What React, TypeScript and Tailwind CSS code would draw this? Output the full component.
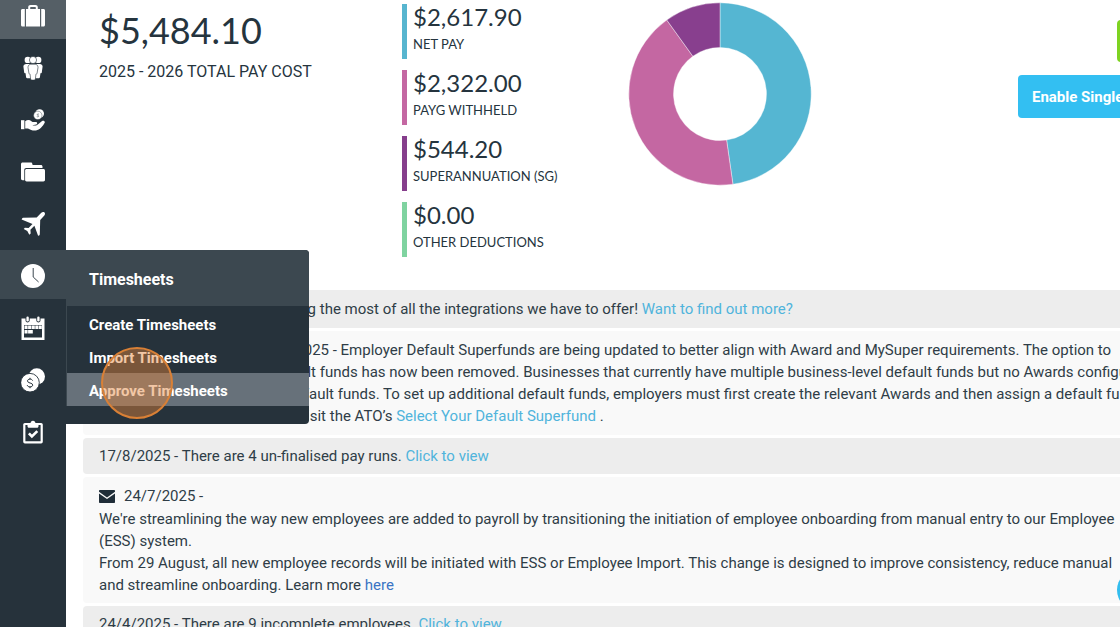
import type { ReactNode } from 'react';

function SuitcaseIcon() {
  return (
    <svg viewBox="0 0 24 24" className="size-6" fill="currentColor" aria-hidden="true">
      <path fillRule="evenodd" d="M5 5h2.200V3.200C7.200 1.800 8.300 1 9.500 1h5c1.200 0 2.300.8 2.300 2.200V5H19v17.500H5zM9.200 5h5.600V3.400c0-.3-.2-.5-.5-.5H9.700c-.3 0-.5.2-.5.5z" />
      <path d="M1.500 5H3.800v17.500H1.500C.6 22.500 0 21.900 0 21V6.500C0 5.600.6 5 1.500 5zM20.200 5h2.300c.9 0 1.500.6 1.500 1.500V21c0 .9-.6 1.500-1.500 1.500h-2.300z" />
    </svg>
  );
}

function PeopleIcon() {
  return (
    <svg viewBox="0 0 24 24" className="size-6" fill="currentColor" aria-hidden="true">
      <circle cx="6.800" cy="3.900" r="3.200" />
      <circle cx="17.200" cy="3.900" r="3.200" />
      <path d="M2.400 10.500C2.400 8.800 3.600 7.900 5.200 7.900h13.600c1.600 0 2.800.9 2.800 2.600l-.8 6c-.1.800-.9.900-1.300.5l-.6 4.200c-.1.700-.5 1.100-1.200 1.100H6.300c-.7 0-1.100-.4-1.200-1.100L4.500 17c-.4.400-1.200.3-1.300-.5z" />
      <circle cx="12" cy="4" r="3.600" stroke="#26323b" strokeWidth=".6" />
      <path stroke="#26323b" strokeWidth=".6" d="M7 11.500C7 9.500 8.200 8.300 9.800 8.300h4.400c1.600 0 2.800 1.200 2.800 3.200l-.9 5.500c-.2.900-.6 1.200-1.200 1.200l-.5 4.800c-.1.700-.5 1.100-1.200 1.100h-2.400c-.7 0-1.100-.4-1.200-1.100l-.5-4.800c-.6 0-1-.3-1.200-1.200z" />
    </svg>
  );
}

function HandCoinIcon() {
  return (
    <svg viewBox="0 0 24 24" className="size-6" fill="currentColor" aria-hidden="true">
      <path d="M0 12.200h3.400v9H0z" />
      <path d="M4.200 13.200c2-1.600 4.600-1.500 6.200 0l1.200.9h3.300c1.500 0 1.800 2 .4 2.400l-3.900.8c1.800.6 3.700.4 5.400-.9l4.300-3.300c1.600-.9 3.400.4 2.400 1.900-1.700 3.200-4.700 6.800-8.500 7.400-2.800.4-5.500-.3-8-1.900H4.200z" />
      <circle cx="18.600" cy="5.600" r="4.400" />
      <circle cx="16.800" cy="7.400" r="4.200" stroke="#26323b" strokeWidth=".4" />
      <path d="M18 6.200c-2-.7-2.300 1-1.100 1.200 1.300.3 1 1.900-1.100 1.200" fill="none" stroke="#26323b" strokeWidth=".5" />
    </svg>
  );
}

function FolderIcon() {
  return (
    <svg viewBox="0 0 24 24" className="size-6" fill="currentColor" aria-hidden="true">
      <path d="M1.600 2.500h8.200c.9 0 1.300.4 1.500 1.200l.3 1.300h8.300c.9 0 1.600.7 1.600 1.500V8H5.200C4 8 3.300 8.700 3.300 9.900v10.300H1.600C.7 20.200 0 19.500 0 18.600V4c0-.9.700-1.500 1.600-1.500z" />
      <path d="M5.600 8.900h16.800c.9 0 1.600.6 1.600 1.500v9.400c0 .9-.7 1.600-1.600 1.600H5.600c-.9 0-1.500-.7-1.500-1.600v-9.400c0-.9.600-1.500 1.500-1.500z" />
    </svg>
  );
}

function PlaneIcon() {
  return (
    <svg viewBox="0 0 24 24" className="size-6" fill="currentColor" aria-hidden="true">
      <path d="M23.500.5c.9.900.5 2.400-.6 3.600l-3.700 4-.4 14.200c0 .5-.3.900-.7 1.100l-1 .4-3.700-10-4 4 .3 3.600-1.400 1.300-2-3.600-3.600-2 1.200-1.300 3.700.2 3.900-4L.6 7.500l.5-1.100c.2-.4.500-.6 1-.6l13.600-.4L19.800 1.200c1.200-1.200 2.800-1.600 3.700-.7z" />
    </svg>
  );
}

function ClockIcon() {
  return (
    <svg viewBox="0 0 24 24" className="size-6" aria-hidden="true">
      <circle cx="12" cy="12" r="12" fill="currentColor" />
      <path d="M12.200 4v9l5.400 5" fill="none" stroke="#3c4850" strokeWidth="1" />
    </svg>
  );
}

function CalendarIcon() {
  return (
    <svg viewBox="0 0 24 24" className="size-6" aria-hidden="true">
      <path fill="currentColor" d="M.5 2.500h4v1.800c0 2.800 4.200 2.800 4.200 0V2.500h6.600v1.800c0 2.800 4.200 2.800 4.200 0V2.500h4V24H.5z" />
      <rect x="5.400" y="0.500" width="2.400" height="5" rx="1.200" fill="currentColor" />
      <rect x="16.200" y="0.500" width="2.400" height="5" rx="1.200" fill="currentColor" />
      <path fill="#26323b" d="M3 9h18v12.500H3z" />
      <path fill="currentColor" d="M3.500 9.600h3.100v3.400H3.500zM7.100 9.600h3.100v3.400H7.100zM10.700 9.600h3.100v3.400h-3.100zM14.300 9.600h3.100v3.400h-3.100zM17.900 9.600h2.900v3.400h-2.900zM3.500 14h3.100v3.400H3.500zM7.100 14h4.700v3.400H7.100z" />
    </svg>
  );
}

function CoinsIcon() {
  return (
    <svg viewBox="0 0 24 24" className="size-6" aria-hidden="true">
      <circle cx="15.800" cy="8.500" r="8.200" fill="currentColor" />
      <circle cx="9" cy="14.700" r="9.300" fill="currentColor" stroke="#26323b" strokeWidth=".9" />
      <path d="M11.600 12.600c-.5-1.100-1.400-1.500-2.600-1.500-1.400 0-2.500.7-2.500 1.900 0 2.700 5.200 1.300 5.200 4 0 1.300-1.200 1.900-2.700 1.900s-2.500-.6-2.800-1.800M9 9.800v1.400M9 18.800v1.400" fill="none" stroke="#26323b" strokeWidth="1" />
    </svg>
  );
}

function ClipboardIcon() {
  return (
    <svg viewBox="0 0 24 24" className="size-6" aria-hidden="true">
      <rect x="3.300" y="4" width="17.400" height="18.300" rx=".6" fill="none" stroke="currentColor" strokeWidth="2.200" />
      <path fill="currentColor" d="M6.500 3.500h3C9.600 1.700 10.500.7 12 .7s2.400 1 2.500 2.800h3v2.700c0 .9-.6 1.500-1.500 1.500H8c-.9 0-1.500-.6-1.500-1.500z" />
      <path d="M7.900 13.300l3 3.200 5.400-5.400" fill="none" stroke="currentColor" strokeWidth="2.600" />
    </svg>
  );
}

const navItems: { label: string; icon: ReactNode; tone: string; menu?: boolean }[] = [
  { label: 'Business', icon: <SuitcaseIcon />, tone: 'bg-[#555f66]' },
  { label: 'Employees', icon: <PeopleIcon />, tone: '' },
  { label: 'Pay', icon: <HandCoinIcon />, tone: '' },
  { label: 'Reports', icon: <FolderIcon />, tone: '' },
  { label: 'Leave', icon: <PlaneIcon />, tone: '' },
  { label: 'Timesheets', icon: <ClockIcon />, tone: 'bg-[#3c4850]', menu: true },
  { label: 'Rosters', icon: <CalendarIcon />, tone: '' },
  { label: 'Expenses', icon: <CoinsIcon />, tone: '' },
  { label: 'Tasks', icon: <ClipboardIcon />, tone: '' },
];

function TimesheetsMenu() {
  return (
    <div className="absolute top-0 left-full z-10 w-[243px] overflow-hidden rounded-r bg-[#26323b] pb-[18px] font-['Roboto',sans-serif] text-[15px] font-bold text-white">
      <h2 className="flex h-14 items-center bg-[#3c4850] pt-[3px] pl-[23px] text-base">Timesheets</h2>
      <ul className="border-l border-[#3c4850] pt-px">
        <li><a href="#create" className="flex h-[33px] items-center pt-[3px] pl-[22px]">Create Timesheets</a></li>
        <li><a href="#import" className="flex h-[33px] items-center pt-[3px] pl-[22px]">Import Timesheets</a></li>
        <li><a href="#approve" className="flex h-[33px] items-center bg-[#67717a] pt-[3px] pl-[22px]">Approve Timesheets</a></li>
      </ul>
    </div>
  );
}

function Sidebar() {
  return (
    <nav className="w-[66px] shrink-0 bg-[#26323b] text-white">
      <ul className="-mt-[10px] flex flex-col gap-[3px]">
        {navItems.map((item) => (
          <li key={item.label} className="relative">
            <a href="#nav" aria-label={item.label} className={`flex h-[49px] items-center justify-center pt-[3px] ${item.tone}`}>
              {item.icon}
            </a>
            {item.menu && <TimesheetsMenu />}
          </li>
        ))}
      </ul>
    </nav>
  );
}

const stats = [
  { value: '$2,617.90', label: 'NET PAY', bar: 'border-[#57b5cf]' },
  { value: '$2,322.00', label: 'PAYG WITHHELD', bar: 'border-[#c467a2]' },
  { value: '$544.20', label: 'SUPERANNUATION (SG)', bar: 'border-[#863e8c]' },
  { value: '$0.00', label: 'OTHER DEDUCTIONS', bar: 'border-[#7fd3a0]' },
];

const slices = [
  { amount: 2617.9, color: '#55b6d2' },
  { amount: 2322, color: '#c467a2' },
  { amount: 544.2, color: '#883f8e' },
];

function Donut() {
  const total = slices.reduce((sum, s) => sum + s.amount, 0);
  let start = 0;
  const point = (r: number, t: number) =>
    `${(92 + r * Math.sin(t * 2 * Math.PI)).toFixed(2)} ${(92 - r * Math.cos(t * 2 * Math.PI)).toFixed(2)}`;
  return (
    <svg viewBox="0 0 184 184" className="size-[184px]" role="img" aria-label="Pay cost breakdown">
      {slices.map((s) => {
        const a = start;
        const b = start + s.amount / total;
        start = b;
        const large = b - a > 0.5 ? 1 : 0;
        return (
          <path
            key={s.color}
            fill={s.color}
            stroke="#ffffff"
            strokeOpacity=".4"
            strokeWidth="1"
            d={`M${point(91.2, a)}A91.200 91.200 0 ${large} 1 ${point(91.2, b)}L${point(46.5, b)}A46.500 46.500 0 ${large} 0 ${point(46.5, a)}Z`}
          />
        );
      })}
    </svg>
  );
}

function Summary() {
  return (
    <section className="flex h-[290px] pl-[33px]">
      <div className="w-[303px] shrink-0 pt-2">
        <p className="text-[36px] leading-[44px]">$5,484.10</p>
        <p className="pt-[10px] font-['Roboto',sans-serif] text-base leading-5">2025 - 2026 TOTAL PAY COST</p>
      </div>
      <ul className="flex w-[226px] shrink-0 flex-col gap-[11px] pt-1">
        {stats.map((s) => (
          <li key={s.label} className={`h-[55px] border-l-[5px] pl-[6px] ${s.bar}`}>
            <p className="text-2xl leading-[26px]">{s.value}</p>
            <p className="pt-[3px] text-[13px] leading-[22px]">{s.label}</p>
          </li>
        ))}
      </ul>
      <div className="shrink-0 pt-[2px]">
        <Donut />
      </div>
      <div className="ml-auto flex w-[102px] shrink-0 flex-col gap-[13px] pt-[20px]">
        <button aria-label="Start pay run" className="ml-[99px] h-[42px] w-[120px] shrink-0 rounded bg-[#7ed321]" />
        <button className="h-[43px] w-[240px] rounded bg-[#33bff2] pt-[2px] pl-[14px] text-left font-['Roboto',sans-serif] text-[15px] font-bold whitespace-nowrap text-white">
          Enable Single Touch Payroll
        </button>
      </div>
    </section>
  );
}

const link = 'text-[#50b4dc]';

function Notices() {
  return (
    <section className="flex flex-col gap-[3px] pl-[17px] font-['Roboto',sans-serif] text-[15px] leading-[22px] whitespace-nowrap text-[#2f3d47]">
      <p className="rounded-l bg-[#ededed] px-4 py-2">
        <span className="inline-block w-[217px] text-right">making</span> the most of all the integrations we have to offer!{' '}
        <a href="#more" className={link}>Want to find out more?</a>
      </p>
      <div className="rounded-l bg-[#f9f9f9] px-4 py-2">
        <p><span className="inline-block w-[230px] text-right">2025</span> - Employer Default Superfunds are being updated to better align with Award and MySuper requirements. The option to</p>
        <p><span className="inline-block w-[217px] text-right">default</span> funds has now been removed. Businesses that currently have multiple business-level default funds but no Awards configured</p>
        <p><span className="inline-block w-[235px] text-right">default</span> funds. To set up additional default funds, employers must first create the relevant Awards and then assign a default fund</p>
        <p><span className="inline-block w-[227px] text-right">visit</span> the ATO’s <a href="#superfund" className={link}>Select Your Default Superfund</a> .</p>
      </div>
      <p className="rounded-l bg-[#ededed] px-4 py-[7px]">
        17/8/2025 - There are 4 un-finalised pay runs. <a href="#runs" className={link}>Click to view</a>
      </p>
      <div className="rounded-l bg-[#f9f9f9] px-4 py-[7px]">
        <p className="flex h-6 items-center">
          <svg viewBox="0 0 16 13" className="mr-[9px] h-[13px] w-4" aria-hidden="true">
            <path fill="#1f2d38" d="M.8 0h14.400c.5 0 .8.300.8.800v1L8 7.500 0 1.800v-1C0 .3.300 0 .8 0zM0 3.500l8 5.600 8-5.600v8.700c0 .5-.3.800-.8.800H.8c-.5 0-.8-.3-.8-.8z" />
          </svg>
          24/7/2025 -
        </p>
        <p>We're streamlining the way new employees are added to payroll by transitioning the initiation of employee onboarding from manual entry to our Employee</p>
        <p>(ESS) system.</p>
        <p>From 29 August, all new employee records will be initiated with ESS or Employee Import. This change is designed to improve consistency, reduce manual</p>
        <p>and streamline onboarding. Learn more <a href="#learn" className="text-[#3a74c4]">here</a></p>
      </div>
      <p className="rounded-l bg-[#ededed] px-4 py-[7px]">
        24/4/2025 - There are 9 incomplete employees. <a href="#employees" className={link}>Click to view</a>
      </p>
    </section>
  );
}

export default function App() {
  return (
    <div className="relative flex h-screen overflow-hidden bg-white font-['Lato',sans-serif] text-[#25343e]">
      <Sidebar />
      <main className="min-w-0 flex-1">
        <Summary />
        <Notices />
      </main>
      <div className="pointer-events-none absolute top-[347px] left-[101px] z-20 size-[72px] rounded-full border-2 border-[#d98036] bg-[#e2823a]/45" />
      <button aria-label="Help" className="absolute -right-[37px] bottom-[17px] size-10 rounded-full bg-[#33bdee]" />
    </div>
  );
}
